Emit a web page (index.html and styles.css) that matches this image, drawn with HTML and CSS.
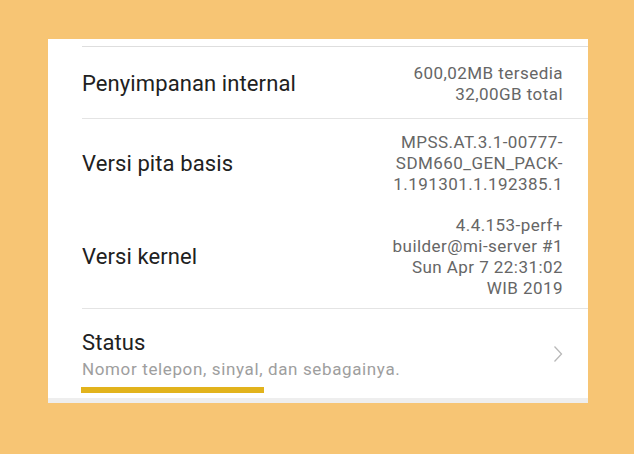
FILE: index.html
```html
<!DOCTYPE html>
<html lang="id">
<head>
    <meta charset="UTF-8">
    <meta name="viewport" content="width=device-width, initial-scale=1.0">
    <title>Tentang ponsel</title>
    <link rel="stylesheet" href="styles.css">
</head>
<body>
    <div class="card">
        <div class="list">
            <div class="row row-storage">
                <div class="label">Penyimpanan internal</div>
                <div class="value">600,02MB tersedia<br>32,00GB total</div>
            </div>
            <div class="row row-baseband no-line">
                <div class="label">Versi pita basis</div>
                <div class="value">MPSS.AT.3.1-00777-<br>SDM660_GEN_PACK-<br>1.191301.1.192385.1</div>
            </div>
            <div class="row row-kernel">
                <div class="label">Versi kernel</div>
                <div class="value">4.4.153-perf+<br>builder@mi-server #1<br>Sun Apr 7 22:31:02<br>WIB 2019</div>
            </div>
            <div class="row row-status no-line">
                <div class="text">
                    <div class="label">Status</div>
                    <div class="summary">Nomor telepon, sinyal, dan sebagainya.</div>
                    <div class="mark"></div>
                </div>
                <svg class="chevron" width="10" height="18" viewBox="0 0 10 18">
                    <path d="M1.5 1.5 L8.5 9 L1.5 16.5" fill="none" stroke="#b8b8b8" stroke-width="1.3"/>
                </svg>
            </div>
        </div>
        <div class="gap"></div>
    </div>
</body>
</html>
```

FILE: styles.css
```css
body {
    margin: 0;
    height: 100vh;
    background-color: #f7c574;
    font-family: Roboto, "Noto Sans", sans-serif;
}
.card {
    margin: 39px 0 0 48px;
    width: 540px;
    padding-top: 7px;
    background-color: #fff;
}
.list {
    border-top: 1px solid #dedede;
    margin-left: 34px;
}
.row {
    display: flex;
    align-items: center;
    justify-content: space-between;
    padding-right: 25px;
    border-bottom: 1px solid #e4e4e4;
}
.row.no-line {
    border-bottom: none;
}
.row-storage {
    padding-top: 16px;
    padding-bottom: 13px;
}
.row-baseband {
    padding-top: 13px;
    padding-bottom: 10px;
}
.row-kernel {
    padding-top: 10px;
    padding-bottom: 9px;
}
.row-status {
    padding-top: 21px;
    padding-bottom: 5px;
}
.label {
    font-size: 22px;
    line-height: 26px;
    letter-spacing: 0.1px;
    color: #212121;
}
.value {
    font-size: 17px;
    line-height: 21px;
    letter-spacing: 0.45px;
    color: #666;
    text-align: right;
}
.summary {
    margin-top: 2px;
    font-size: 17px;
    line-height: 22px;
    letter-spacing: 0.63px;
    color: #9e9e9e;
}
.mark {
    width: 183px;
    height: 6px;
    margin-top: 7px;
    margin-left: -1px;
    background-color: #e2b31c;
}
.chevron {
    margin-bottom: 16px;
}
.gap {
    height: 5px;
    background-color: #eeeeee;
}
```
